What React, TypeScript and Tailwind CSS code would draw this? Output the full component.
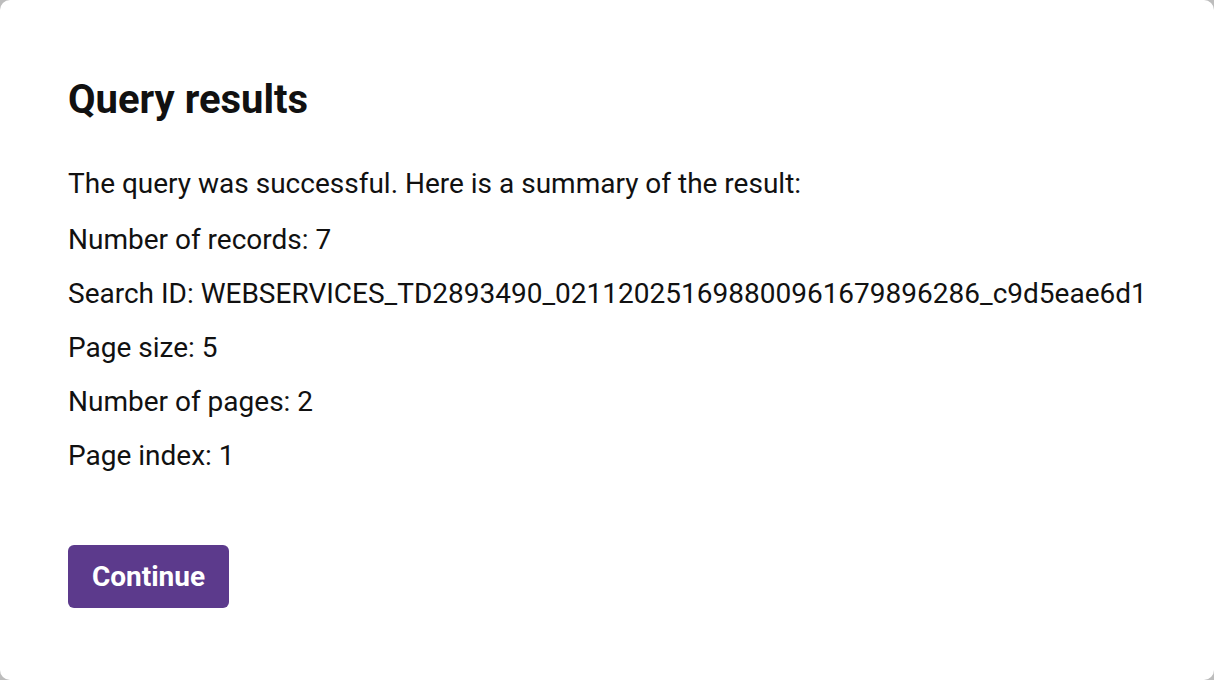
export default function App() {
  const lines = [
    "Number of records: 7",
    "Search ID: WEBSERVICES_TD2893490_021120251698800961679896286_c9d5eae6d1",
    "Page size: 5",
    "Number of pages: 2",
    "Page index: 1",
  ];

  return (
    <div className="h-[680px] w-[1214px] bg-[#bdbdbd] font-['Roboto',sans-serif]">
      <div className="flex h-full w-full flex-col rounded-[10px] bg-white px-[68px] pt-[78px] text-[#111]">
        <h1 className="text-[40px] font-bold leading-[44px]">Query results</h1>
        <div className="mt-[44px] flex flex-col gap-[18px] text-[28px] leading-[36px]">
          <p className="mb-[2px]">The query was successful. Here is a summary of the result:</p>
          {lines.map((line) => (
            <p className="whitespace-nowrap" key={line}>
              {line}
            </p>
          ))}
        </div>
        <button
          className="mt-[71px] h-[63px] w-[161px] rounded-[6px] bg-[#5c3a8c] text-[28px] font-bold text-white"
          type="button"
        >
          Continue
        </button>
      </div>
    </div>
  );
}
